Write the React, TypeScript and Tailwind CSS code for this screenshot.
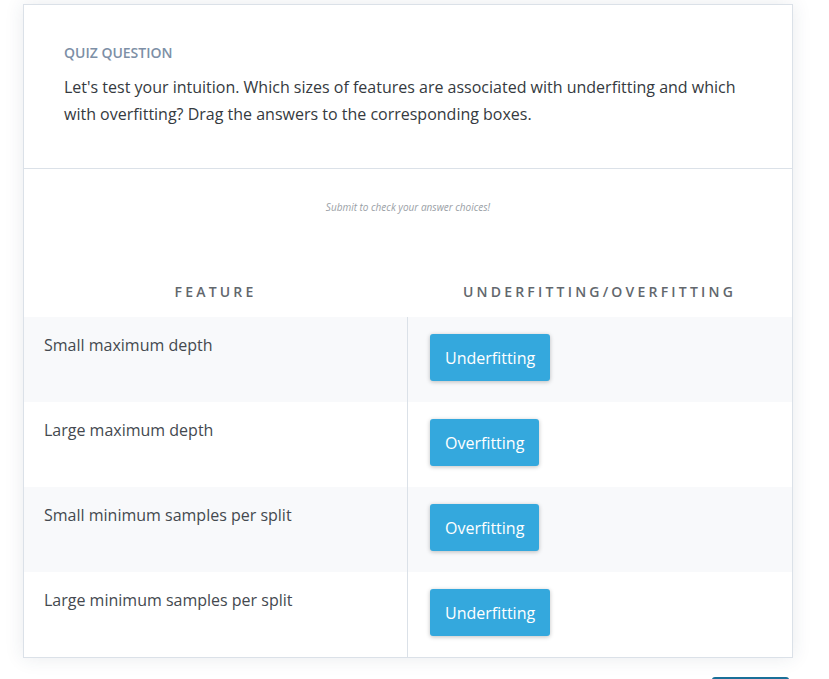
import React from "react";

const rows = [
  { feature: "Small maximum depth", answer: "Underfitting", shaded: true },
  { feature: "Large maximum depth", answer: "Overfitting", shaded: false },
  { feature: "Small minimum samples per split", answer: "Overfitting", shaded: true },
  { feature: "Large minimum samples per split", answer: "Underfitting", shaded: false },
];

export default function App() {
  return (
    <div
      className="min-h-[679px] w-[829px] overflow-hidden bg-white pl-[23px] pt-[4px]"
      style={{ fontFamily: '"Open Sans", "Noto Sans", sans-serif' }}
    >
      <div className="w-[770px] border border-[#dbe1e8] bg-white shadow-[0_0_18px_rgba(40,60,90,0.10)]">
        <div className="border-b border-[#dbe1e8] px-[40px] pb-[40px] pt-[38px]">
          <div className="text-[14px] font-semibold uppercase leading-[20px] text-[#7d8fa6]">
            Quiz Question
          </div>
          <p className="mt-[11px] text-[16px] leading-[27px] text-[#353a40]">
            Let's test your intuition. Which sizes of features are associated with underfitting and which
            with overfitting? Drag the answers to the corresponding boxes.
          </p>
        </div>
        <div className="pt-[30px]">
          <div className="text-center text-[10px] italic leading-[16px] text-[#9aa0a6]">
            Submit to check your answer choices!
          </div>
          <div className="mt-[52px] grid grid-cols-[383px_1fr]">
            <div className="flex h-[50px] items-center justify-center pb-[2px] text-[14px] font-semibold uppercase tracking-[3.2px] text-[#62676d]">
              Feature
            </div>
            <div className="flex h-[50px] items-center justify-center pb-[2px] text-[14px] font-semibold uppercase tracking-[3.2px] text-[#62676d]">
              Underfitting/Overfitting
            </div>
          </div>
          {rows.map((r, i) => (
            <div
              key={i}
              className={`grid h-[85px] grid-cols-[383px_1fr] ${r.shaded ? "bg-[#f8f9fb]" : "bg-white"}`}
            >
              <div className="px-[20px] pt-[16px] text-[16px] leading-[24px] text-[#44494f]">
                {r.feature}
              </div>
              <div className="border-l border-[#dbe1e8] pl-[22px] pt-[17px]">
                <div className="inline-flex h-[47px] items-center rounded-[3px] bg-[#34a8dd] px-[15px] text-[16px] text-white shadow-[0_1px_4px_rgba(0,0,0,0.25)]">
                  {r.answer}
                </div>
              </div>
            </div>
          ))}
        </div>
      </div>
      <div className="ml-[689px] mt-[19px] h-[20px] w-[77px] rounded-t-[3px] border-t-[2px] border-[#1a6f98] bg-[#2d9ad0]" />
    </div>
  );
}
